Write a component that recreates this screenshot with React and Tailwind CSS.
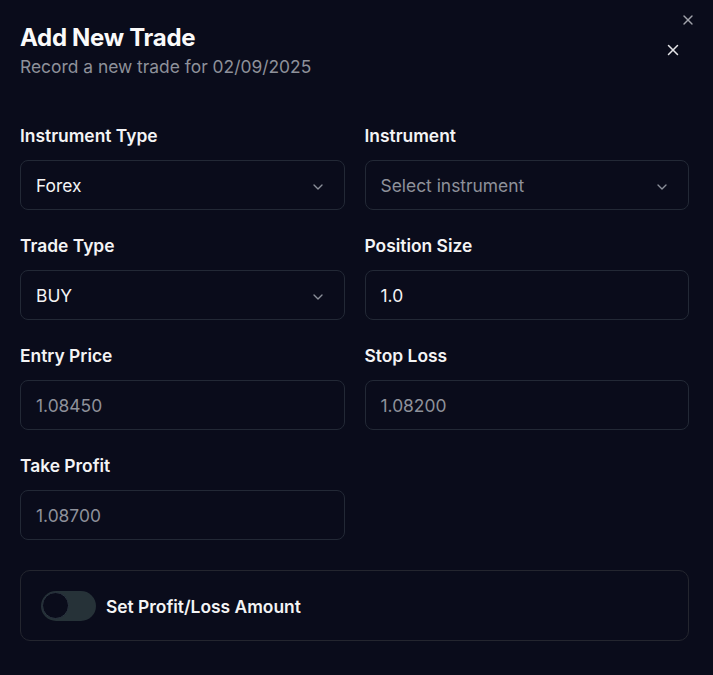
import React from "react";

function Chevron() {
  return (
    <svg width="16" height="16" viewBox="0 0 24 24" fill="none" stroke="currentColor" strokeWidth="2" strokeLinecap="round" strokeLinejoin="round" className="text-[#8b8f99] mr-[2px]">
      <path d="m6 9 6 6 6-6" />
    </svg>
  );
}

function XIcon({ size, className }) {
  return (
    <svg width={size} height={size} viewBox="0 0 24 24" fill="none" stroke="currentColor" strokeWidth="2" strokeLinecap="round" strokeLinejoin="round" className={className}>
      <path d="M18 6 6 18" />
      <path d="m6 6 12 12" />
    </svg>
  );
}

function Field({ label, children }) {
  return (
    <div className="flex flex-col">
      <div className="text-[17.4px] leading-6 font-semibold text-[#f4f4f5] mb-3">{label}</div>
      {children}
    </div>
  );
}

function Box({ children }) {
  return (
    <div className="h-[50px] rounded-lg border border-[#232936] bg-[#0a0c1b] pl-[15px] pr-4 pt-[3px] flex items-center justify-between text-[17.4px]">
      {children}
    </div>
  );
}

export default function App() {
  return (
    <div className="w-[713px] h-[675px] bg-[#0a0c1b] relative overflow-hidden" style={{ fontFamily: "Inter, 'Noto Sans', sans-serif" }}>
      <div className="absolute right-[17px] top-[12px]">
        <XIcon size={16} className="text-[#a1a3ab]" />
      </div>
      <div className="absolute right-[31px] top-[41px]">
        <XIcon size={18} className="text-[#e4e4e7]" />
      </div>
      <div className="pl-5 pr-6 pt-[22px]">
        <h1 className="text-[24px] leading-8 font-bold text-[#fafafa] tracking-[-0.3px]">Add New Trade</h1>
        <p className="text-[17.4px] leading-6 text-[#8e919a] mt-[1px]">Record a new trade for 02/09/2025</p>

        <div className="grid grid-cols-2 gap-x-5 gap-y-6 mt-[45px]">
          <Field label="Instrument Type">
            <Box>
              <span className="text-[#f4f4f5]">Forex</span>
              <Chevron />
            </Box>
          </Field>
          <Field label="Instrument">
            <Box>
              <span className="text-[#8e919a]">Select instrument</span>
              <Chevron />
            </Box>
          </Field>
          <Field label="Trade Type">
            <Box>
              <span className="text-[#f4f4f5]">BUY</span>
              <Chevron />
            </Box>
          </Field>
          <Field label="Position Size">
            <Box>
              <span className="text-[#f4f4f5]">1.0</span>
            </Box>
          </Field>
          <Field label="Entry Price">
            <Box>
              <span className="text-[#8e919a]">1.08450</span>
            </Box>
          </Field>
          <Field label="Stop Loss">
            <Box>
              <span className="text-[#8e919a]">1.08200</span>
            </Box>
          </Field>
          <Field label="Take Profit">
            <Box>
              <span className="text-[#8e919a]">1.08700</span>
            </Box>
          </Field>
        </div>

        <div className="mt-[30px] h-[71px] rounded-[10px] border border-[#24262f] px-5 flex items-center gap-[10px]">
          <div className="w-[55px] h-[30px] rounded-full bg-[#263238] flex items-center pl-[1px]">
            <div className="w-[27px] h-[27px] rounded-full bg-[#0a0c1b] border border-[#2b3540]" />
          </div>
          <span className="text-[17.4px] font-semibold text-[#f4f4f5] pt-[3px]">Set Profit/Loss Amount</span>
        </div>
      </div>
    </div>
  );
}
